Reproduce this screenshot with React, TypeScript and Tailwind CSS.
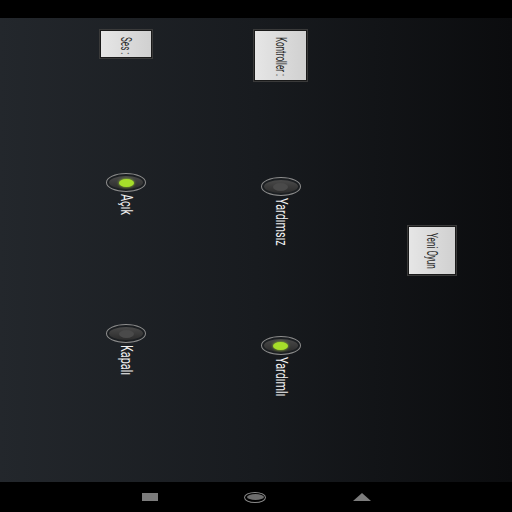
import React from "react";

const font = { fontFamily: "Roboto, 'Liberation Sans', sans-serif" };

function VText({ children, className = "" }: { children: React.ReactNode; className?: string }) {
  return (
    <span
      className={`[writing-mode:vertical-rl] whitespace-nowrap leading-none origin-top ${className}`}
      style={font}
    >
      {children}
    </span>
  );
}

function Button({ label, w, h }: { label: string; w: string; h: string }) {
  return (
    <div
      className={`${w} ${h} flex items-start justify-center pt-[6px] bg-gradient-to-r from-[#e6e6e6] to-[#d0d0d0] border border-[#1a1a1a] shadow-[0_0_0_1px_#3a3a3a]`}
    >
      <VText className="text-[14px] text-[#2a2a2a] scale-y-[0.58]">{label}</VText>
    </div>
  );
}

function Radio({ label, checked }: { label: string; checked?: boolean }) {
  return (
    <div className="flex flex-col items-center">
      <div className="w-[40px] h-[19px] rounded-[50%] border-[1.5px] border-[#8c8c8c] p-[2px] bg-[#1c1f22]">
        <div className="w-full h-full rounded-[50%] bg-gradient-to-b from-[#4a4a4a] to-[#2c2c2c] flex items-center justify-center">
          <div
            className={`w-[15px] h-[8px] rounded-[50%] ${
              checked ? "bg-[#a6de2a] shadow-[0_0_3px_#a4dc2c]" : "bg-[#4a4a4a]"
            }`}
          />
        </div>
      </div>
      <VText className="mt-[2px] text-[16px] text-[#f0f0f0] scale-y-[0.68]">{label}</VText>
    </div>
  );
}

export default function App() {
  return (
    <div className="w-[512px] h-[512px] flex flex-col bg-black overflow-hidden">
      <div className="h-[18px] bg-black" />
      <div className="flex-1 flex bg-gradient-to-r from-[#23272c] via-[#181b1f] to-[#0b0c0e] pt-[12px]">
        {/* column 1 */}
        <div className="ml-[100px] w-[52px] flex flex-col items-center">
          <Button label="Ses :" w="w-[52px]" h="h-[28px]" />
          <div className="mt-[115px] h-[151px]">
            <Radio label="Açık" checked />
          </div>
          <Radio label="Kapalı" />
        </div>
        {/* column 2 */}
        <div className="ml-[102px] w-[53px] flex flex-col items-center">
          <Button label="Kontroller :" w="w-[53px]" h="h-[51px]" />
          <div className="mt-[96px] h-[159px]">
            <Radio label="Yardımsız" />
          </div>
          <Radio label="Yardımlı" checked />
        </div>
        {/* column 3 */}
        <div className="ml-[101px] w-[48px] flex flex-col items-center">
          <div className="mt-[196px]">
            <Button label="Yeni Oyun" w="w-[48px]" h="h-[49px]" />
          </div>
        </div>
      </div>
      <div className="h-[30px] bg-black flex items-center">
        <div className="ml-[142px] w-[16px] h-[8px] bg-[#7c7c7c]" />
        <div className="ml-[86px] w-[22px] h-[11px] rounded-[50%] border-[1.5px] border-[#8a8a8a] p-[1.5px]">
          <div className="w-full h-full rounded-[50%] bg-[#6e6e6e]" />
        </div>
        <svg className="ml-[87px]" width="18" height="8" viewBox="0 0 18 8">
          <polygon points="9,0 18,8 0,8" fill="#7c7c7c" />
        </svg>
      </div>
    </div>
  );
}
